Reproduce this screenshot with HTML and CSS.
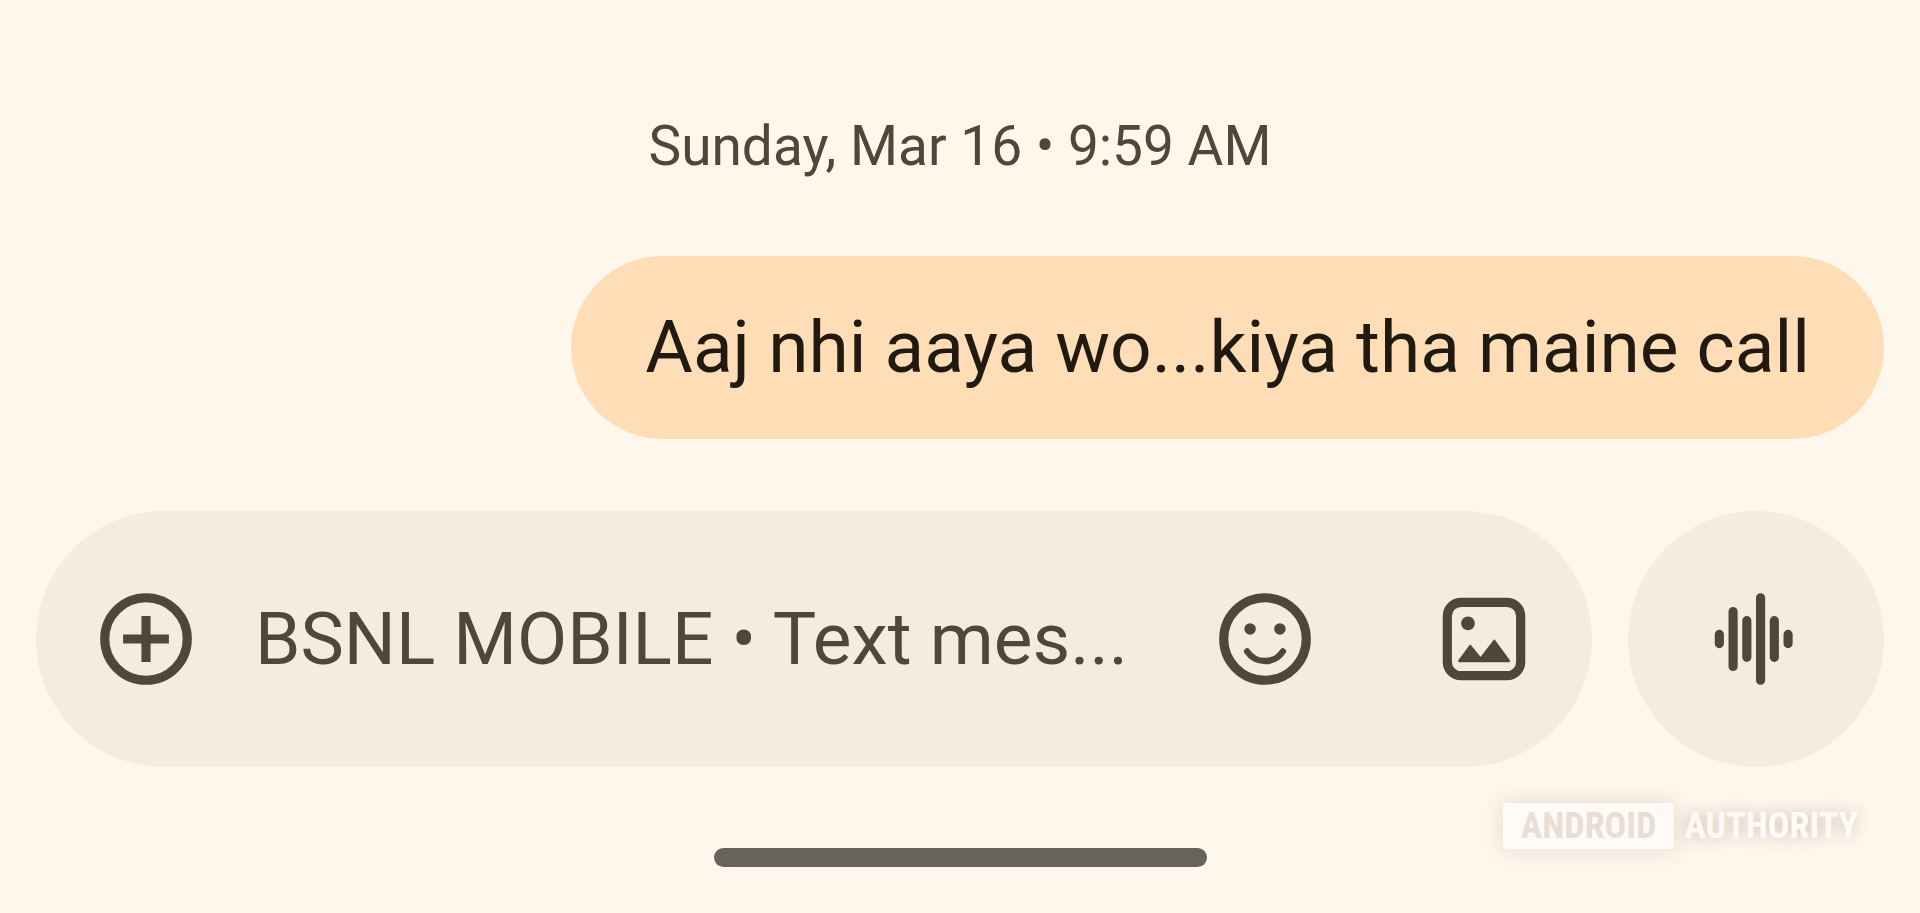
FILE: index.html
```html
<!DOCTYPE html>
<html lang="en">
<head>
  <meta charset="UTF-8" />
  <meta name="viewport" content="width=device-width, initial-scale=1.0"/>
  <title>Messages</title>
  <link rel="stylesheet" href="styles.css">
</head>
<body>
  <main class="chat">
    <time class="date">Sunday, Mar 16 • 9:59 AM</time>
    <div class="bubble">Aaj nhi aaya wo...kiya tha maine call</div>
  </main>

  <form class="composer">
    <div class="input-bar">
      <button type="button" class="icon-btn" aria-label="Add">
        <svg class="icon" viewBox="0 0 24 24">
          <circle cx="12" cy="12" r="9"/>
          <path d="M12 7v10M7 12h10"/>
        </svg>
      </button>
      <input type="text" class="message-input" aria-label="Message" placeholder="BSNL MOBILE • Text mes...">
      <div class="actions">
        <button type="button" class="icon-btn" aria-label="Emoji">
          <svg class="icon" viewBox="0 0 24 24">
            <circle cx="12" cy="12" r="9"/>
            <circle class="solid" cx="8.75" cy="9.8" r="1.25"/>
            <circle class="solid" cx="15.25" cy="9.8" r="1.25"/>
            <path class="smile" d="M8.1 14.7a4.65 4.65 0 0 0 7.8 0"/>
          </svg>
        </button>
        <button type="button" class="icon-btn" aria-label="Gallery">
          <svg class="icon" viewBox="0 0 24 24">
            <rect x="4" y="4" width="16" height="16" rx="3"/>
            <circle class="solid" cx="8.5" cy="8.6" r="1.5"/>
            <path class="hills" d="M6.6 16.8L9 13.5l2.25 2.8 3-3.9 3.2 4.4z"/>
          </svg>
        </button>
      </div>
    </div>
    <button type="button" class="icon-btn voice-btn" aria-label="Voice message">
      <svg class="icon rounded" viewBox="0 0 24 24">
        <path d="M4 11v2M7 6v12M10 8v8M13 3v18M16 8v8M19 11v2"/>
      </svg>
    </button>
  </form>

  <footer class="footer">
    <div class="home-bar"></div>
    <div class="watermark">
      <span class="tag">ANDROID</span>
      <span class="word">AUTHORITY</span>
    </div>
  </footer>
</body>
</html>
```

FILE: styles.css
```css
* {
  box-sizing: border-box;
}

body {
  margin: 0;
  min-height: 100vh;
  padding: 0 36px;
  display: flex;
  flex-direction: column;
  background: #fff6ec;
  color: #50463a;
  font-family: Roboto, sans-serif;
}

.chat {
  display: flex;
  flex-direction: column;
  padding-top: 112px;
}

.date {
  align-self: center;
  font-size: 55px;
  line-height: 68px;
}

.bubble {
  align-self: flex-end;
  margin-top: 76px;
  padding: 48px 74px;
  border-radius: 92px;
  background: #ffddb6;
  color: #211a11;
  font-size: 73px;
  line-height: 87px;
}

.composer {
  display: flex;
  gap: 36px;
  margin-top: 72px;
}

.input-bar {
  flex: 1;
  min-width: 0;
  height: 256px;
  padding: 0 53px 0 55px;
  display: flex;
  align-items: center;
  gap: 54px;
  border-radius: 128px;
  background: #f6ebe1;
}

.message-input {
  flex: 1;
  min-width: 0;
  padding: 0;
  border: none;
  outline: none;
  background: transparent;
  color: #50463a;
  font-family: inherit;
  font-size: 73px;
}

.message-input::placeholder {
  color: #50463a;
  opacity: 1;
}

.actions {
  display: flex;
  gap: 109px;
}

.icon-btn {
  display: flex;
  align-items: center;
  justify-content: center;
  padding: 0;
  border: none;
  background: transparent;
  color: #50463a;
  cursor: pointer;
}

.voice-btn {
  width: 256px;
  height: 256px;
  border-radius: 50%;
  background: #f6ebe1;
}

.icon {
  width: 110px;
  height: 110px;
  fill: none;
  stroke: currentColor;
  stroke-width: 2;
}

.rounded {
  stroke-linecap: round;
}

.solid {
  fill: currentColor;
  stroke: none;
}

.smile {
  stroke-width: 1.4;
  stroke-linecap: round;
}

.hills {
  fill: currentColor;
  stroke-width: 0.5;
  stroke-linejoin: round;
}

.footer {
  display: grid;
  grid-template-columns: 1fr 493px 1fr;
  align-items: end;
  margin-top: 36px;
}

.home-bar {
  grid-column: 2;
  height: 19px;
  border-radius: 10px;
  background: #66625c;
}

.watermark {
  justify-self: end;
  display: flex;
  align-items: center;
  gap: 10px;
  margin: 0 26px 18px 0;
  font-family: "Roboto Condensed", Roboto, sans-serif;
  font-size: 36px;
  font-weight: bold;
  line-height: 46px;
  color: #fffaf5;
}

.tag {
  padding: 0 18px;
  border-radius: 4px;
  background: #fffaf5;
  color: #e8ded6;
  box-shadow: 0 0 22px rgba(80, 70, 58, 0.16);
}

.word {
  text-shadow: 0 0 16px rgba(80, 70, 58, 0.3);
}
```
